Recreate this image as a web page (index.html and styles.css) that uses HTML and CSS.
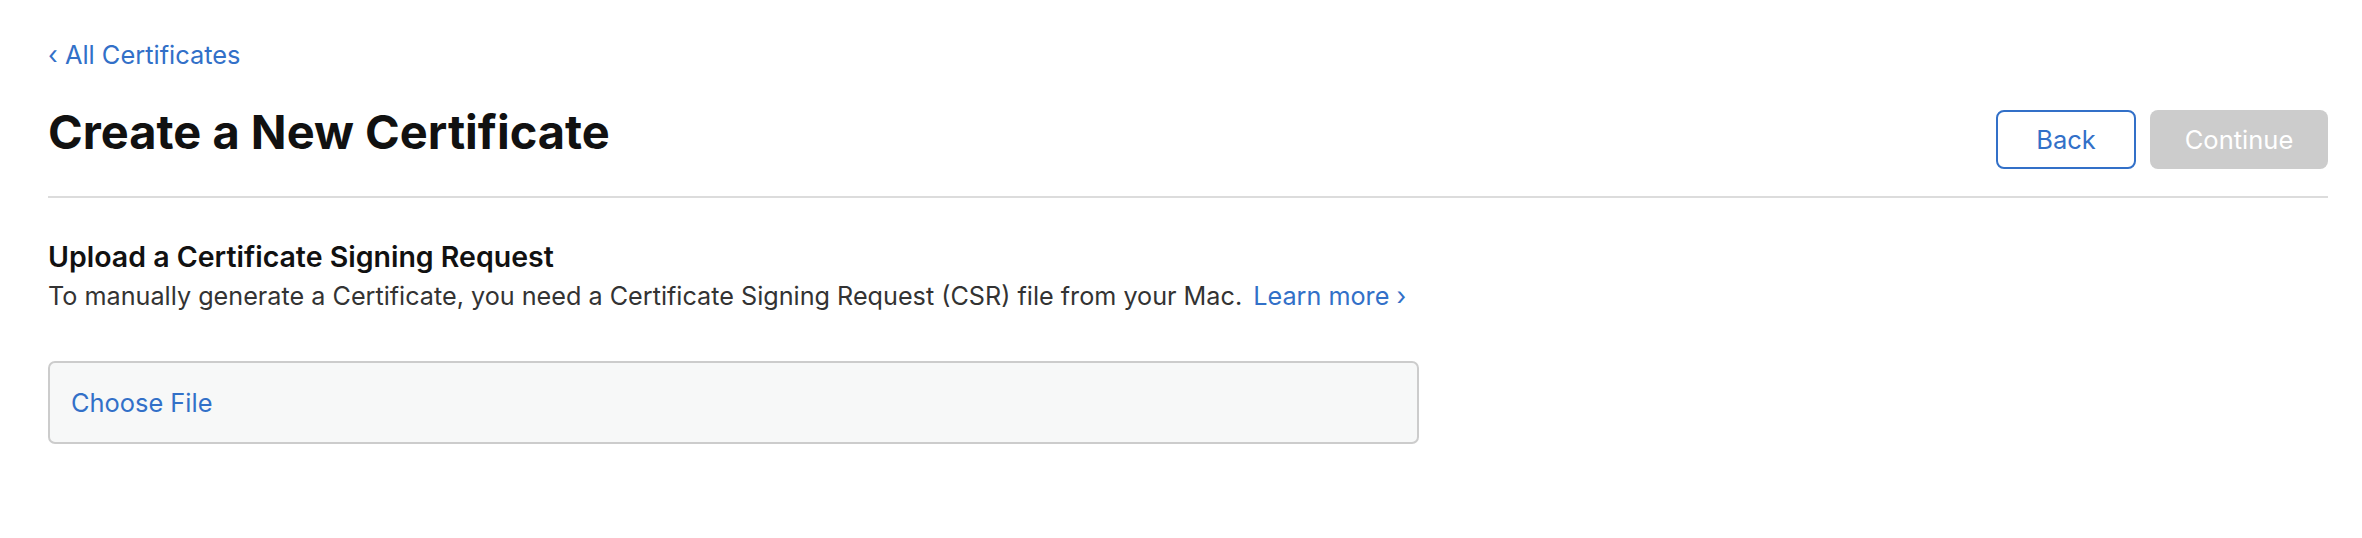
FILE: index.html
```html
<!DOCTYPE html>
<html lang="en">
<head>
<meta charset="utf-8">
<title>Create a New Certificate</title>
<link rel="stylesheet" href="styles.css">
</head>
<body>
<div class="page">
  <a class="breadcrumb" href="#"><span class="chev">‹</span> All Certificates</a>
  <div class="header">
    <h1 class="title">Create a New Certificate</h1>
    <div class="actions">
      <button class="btn btn-back" type="button">Back</button>
      <button class="btn btn-continue" type="button" disabled>Continue</button>
    </div>
  </div>
  <hr class="divider">
  <h2 class="section-title">Upload a Certificate Signing Request</h2>
  <p class="section-desc">To manually generate a Certificate, you need a Certificate Signing Request (CSR) file from your Mac. <a class="link" href="#">Learn more ›</a></p>
  <div class="file-box">
    <span class="choose">Choose File</span>
  </div>
</div>
</body>
</html>
```
FILE: styles.css
```css
html, body {
  margin: 0;
  padding: 0;
  background: #ffffff;
}
body {
  font-family: Inter, "Noto Sans", "Liberation Sans", sans-serif;
  color: #111111;
}
.page {
  padding: 40px 34px 0 48px;
}
.breadcrumb {
  display: inline-block;
  font-size: 25.4px;
  line-height: 30px;
  color: #3270c8;
  text-decoration: none;
}
.header {
  display: flex;
  justify-content: space-between;
  align-items: flex-start;
  margin-top: 35px;
}
.title {
  margin: 0;
  font-size: 47px;
  line-height: 54px;
  font-weight: 700;
  color: #111111;
}
.actions {
  display: flex;
  gap: 14px;
  margin-top: 5px;
}
.btn {
  font-family: inherit;
  font-size: 25.5px;
  border-radius: 8px;
  height: 59px;
  padding: 0;
  box-sizing: border-box;
}
.btn-back {
  width: 140px;
  background: #ffffff;
  border: 2px solid #3270c8;
  color: #3270c8;
}
.btn-continue {
  width: 178px;
  background: #cccccc;
  border: none;
  color: #ffffff;
}
.divider {
  margin: 27px 0 0 0;
  border: none;
  height: 2px;
  background: #dcdcdc;
}
.section-title {
  margin: 42px 0 0 0;
  font-size: 28.5px;
  line-height: 34px;
  font-weight: 600;
  color: #111111;
}
.section-desc {
  margin: 6px 0 0 0;
  font-size: 25.2px;
  line-height: 32px;
  color: #333333;
}
.link {
  color: #3270c8;
  text-decoration: none;
  margin-left: 4px;
}
.file-box {
  margin-top: 49px;
  width: 1371px;
  box-sizing: border-box;
  border: 2px solid #cccccc;
  border-radius: 7px;
  background: #f7f8f8;
  padding: 25px 22px 24px 21px;
}
.choose {
  display: block;
  font-size: 25.4px;
  line-height: 30px;
  color: #3270c8;
}
```
